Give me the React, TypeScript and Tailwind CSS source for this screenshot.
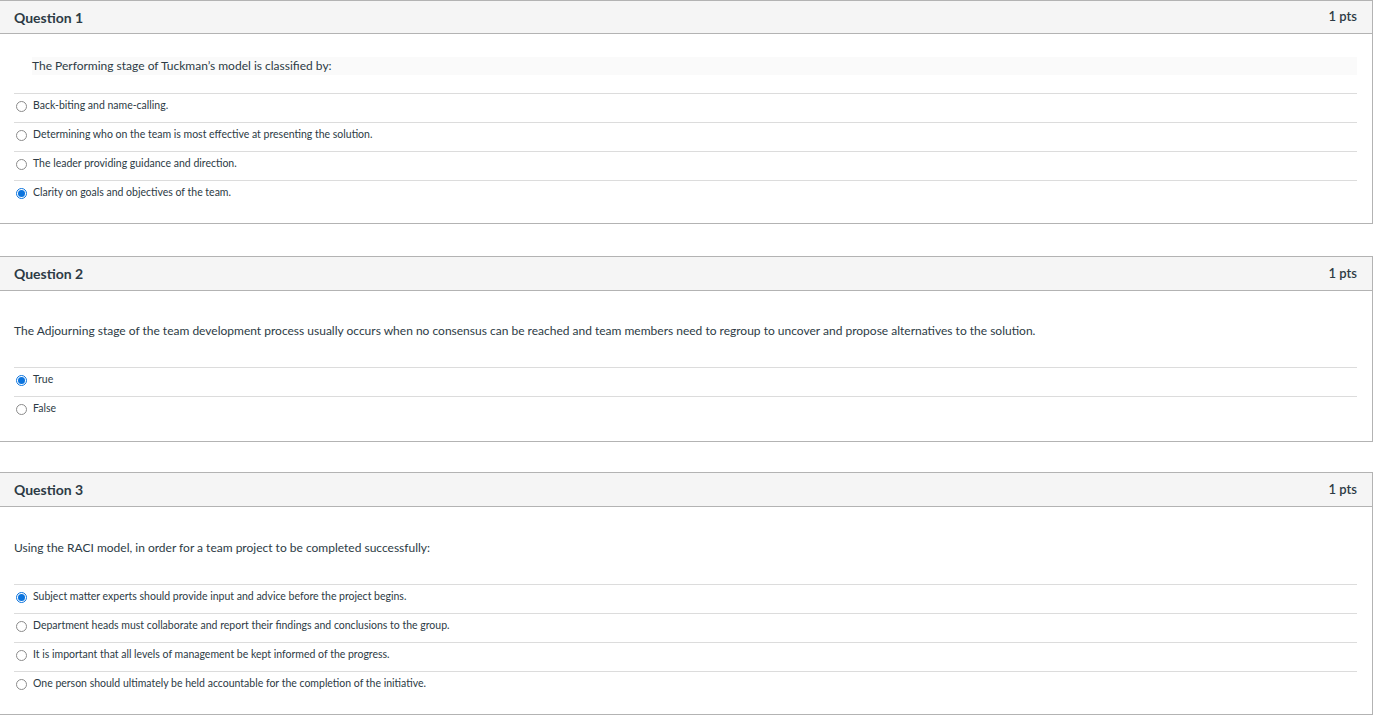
import React from 'react';

// ─── Quiz data ────────────────────────────────────────────────────────────

interface Question {
  title: string;
  text: string;
  answers: string[];
  selected: number;
  banded?: boolean;
  headerHeight: string;
  textSpacing: string;
  bodyBottom: string;
}

const QUESTIONS: Question[] = [
  {
    title: 'Question 1',
    text: 'The Performing stage of Tuckman’s model is classified by:',
    answers: [
      'Back-biting and name-calling.',
      'Determining who on the team is most effective at presenting the solution.',
      'The leader providing guidance and direction.',
      'Clarity on goals and objectives of the team.',
    ],
    selected: 3,
    banded: true,
    headerHeight: 'h-[33px]',
    textSpacing: 'mt-[23px] mb-[18px]',
    bodyBottom: 'pb-[14px]',
  },
  {
    title: 'Question 2',
    text: 'The Adjourning stage of the team development process usually occurs when no consensus can be reached and team members need to regroup to uncover and propose alternatives to the solution.',
    answers: ['True', 'False'],
    selected: 0,
    headerHeight: 'h-[34px]',
    textSpacing: 'mt-[31px] mb-[27px]',
    bodyBottom: 'pb-[16px]',
  },
  {
    title: 'Question 3',
    text: 'Using the RACI model, in order for a team project to be completed successfully:',
    answers: [
      'Subject matter experts should provide input and advice before the project begins.',
      'Department heads must collaborate and report their findings and conclusions to the group.',
      'It is important that all levels of management be kept informed of the progress.',
      'One person should ultimately be held accountable for the completion of the initiative.',
    ],
    selected: 0,
    headerHeight: 'h-[34px]',
    textSpacing: 'mt-[32px] mb-[27px]',
    bodyBottom: 'pb-[14px]',
  },
];

// ─── Radio ────────────────────────────────────────────────────────────────

function Radio({ checked }: { checked: boolean }) {
  return (
    <span
      className={`flex h-[11px] w-[11px] shrink-0 items-center justify-center rounded-full border bg-white ${
        checked ? 'border-[#0b74de]' : 'border-[#8b8b8b]'
      }`}
    >
      {checked && <span className="h-[7px] w-[7px] rounded-full bg-[#0b74de]" />}
    </span>
  );
}

// ─── Question card ────────────────────────────────────────────────────────

function QuestionCard({ q }: { q: Question }) {
  return (
    <div className="border border-[#b3b3b3] bg-white">
      <div
        className={`flex ${q.headerHeight} items-center justify-between border-b border-[#b3b3b3] bg-[#f5f5f5] pl-[14px] pr-[15px]`}
      >
        <h2 className="text-[14px] font-bold text-[#2d3b45]">{q.title}</h2>
        <span className="text-[13px] font-semibold text-[#2d3b45]">1 pts</span>
      </div>

      <div className={`pl-[14px] pr-[15px] ${q.bodyBottom}`}>
        {q.banded ? (
          <div className={`ml-[18px] flex h-[18px] items-center bg-[#fafafa] text-[12px] text-[#2d3b45] ${q.textSpacing}`}>
            {q.text}
          </div>
        ) : (
          <p className={`flex h-[18px] items-center text-[12px] text-[#2d3b45] ${q.textSpacing}`}>{q.text}</p>
        )}

        {q.answers.map((a, i) => (
          <label
            key={a}
            className="flex h-[29px] items-center gap-[6px] border-t border-[#dcdcdc] pl-[2px] pb-[4px] text-[10.5px] text-[#2d3b45]"
          >
            <Radio checked={i === q.selected} />
            <span>{a}</span>
          </label>
        ))}
      </div>
    </div>
  );
}

// ─── Page ─────────────────────────────────────────────────────────────────

export default function App() {
  return (
    <div className="min-h-screen bg-white font-['Lato','Noto_Sans',sans-serif]">
      <div className="-ml-px w-[1374px]">
        <QuestionCard q={QUESTIONS[0]} />
        <div className="h-[32px]" />
        <QuestionCard q={QUESTIONS[1]} />
        <div className="h-[30px]" />
        <QuestionCard q={QUESTIONS[2]} />
      </div>
    </div>
  );
}
